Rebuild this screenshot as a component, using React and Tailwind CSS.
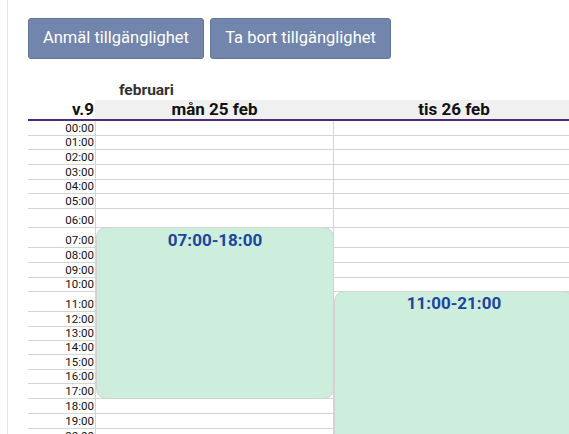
const rows = [
  ["00:00", 15], ["01:00", 14], ["02:00", 15], ["03:00", 15], ["04:00", 14],
  ["05:00", 15], ["06:00", 19], ["07:00", 20], ["08:00", 15], ["09:00", 15],
  ["10:00", 14], ["11:00", 20], ["12:00", 15], ["13:00", 14], ["14:00", 14],
  ["15:00", 15], ["16:00", 14], ["17:00", 15], ["18:00", 15], ["19:00", 15],
  ["20:00", 15], ["21:00", 15], ["22:00", 15], ["23:00", 15],
];

export default function App() {
  return (
    <div className="h-[434px] w-[569px] overflow-hidden bg-white font-['Roboto',sans-serif] text-[#1a1a1a]">
      <div className="ml-[7px] h-full border-l border-[#e4e4e4] pl-[20px] pt-[18px]">
        {/* Actions */}
        <div className="flex gap-[6px]">
          <button className="h-[41px] w-[176px] rounded-[3px] border border-[#62759c] bg-[#7285ac] text-[16.5px] text-white">
            Anmäl tillgänglighet
          </button>
          <button className="h-[41px] w-[181px] rounded-[3px] border border-[#62759c] bg-[#7285ac] text-[16.5px] text-white">
            Ta bort tillgänglighet
          </button>
        </div>

        <div className="w-[620px]">
          <div className="mt-[21px] h-[20px] pl-[91px] text-[15.5px] font-bold leading-[20px] text-[#333]">
            februari
          </div>

          {/* Day header */}
          <div className="flex h-[19px] text-[17px] font-bold leading-[19px] text-[#111]">
            <div className="w-[67px] pr-[1px] text-right">v.9</div>
            <div className="w-[239px] bg-[#f0f0f0] text-center">mån 25 feb</div>
            <div className="w-[240px] bg-[#f0f0f0] text-center">tis 26 feb</div>
          </div>
          <div className="h-[2px] w-[560px] bg-[#4b2b7c]" />

          {/* Grid */}
          <div className="relative">
            {rows.map(([label, h]) => (
              <div key={label} className="flex border-b border-[#d5d5d5]" style={{ height: h }}>
                <div className="flex w-[68px] items-end justify-end border-r border-[#d5d5d5] pr-[1px] text-[11.5px] leading-[13px] text-[#111]">
                  {label}
                </div>
                <div className="w-[238px] border-r border-[#d5d5d5]" />
                <div className="w-[240px]" />
              </div>
            ))}

            <div className="absolute left-[68px] top-[106px] h-[172px] w-[238px] rounded-[10px] border border-[#d2d2d2] bg-[#cdeddd] pt-[1px] text-center text-[17px] font-bold leading-[22px] text-[#1d44a0]">
              07:00-18:00
            </div>
            <div className="absolute left-[306px] top-[170px] h-[220px] w-[240px] rounded-[10px] border border-[#d2d2d2] bg-[#cdeddd] text-center text-[17px] font-bold leading-[22px] text-[#1d44a0]">
              11:00-21:00
            </div>
          </div>
        </div>
      </div>
    </div>
  );
}
